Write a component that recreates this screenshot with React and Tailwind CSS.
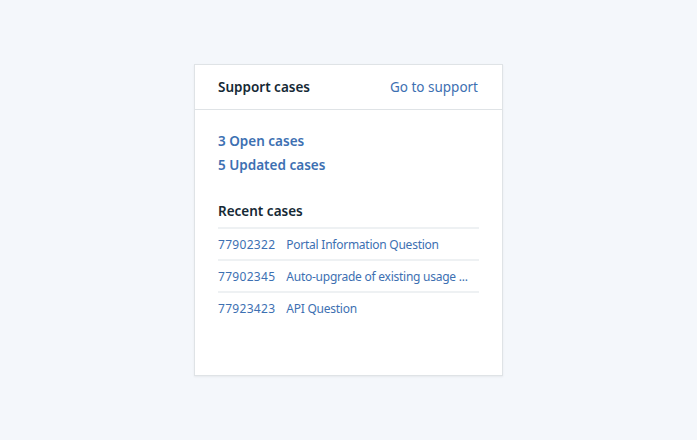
const cases = [
  { id: "77902322", title: "Portal Information Question" },
  { id: "77902345", title: "Auto-upgrade of existing usage ..." },
  { id: "77923423", title: "API Question" },
];

export default function App() {
  return (
    <div
      className="min-h-screen w-full flex items-center justify-center bg-[#f4f7fb]"
      style={{ fontFamily: '"Noto Sans", "Open Sans", sans-serif' }}
    >
      <div className="w-[309px] h-[312px] bg-white border border-[#dfe3e6] shadow-[0_1px_2px_rgba(0,0,0,0.06)] flex flex-col">
        <div className="h-[45px] px-[23px] flex items-center justify-between border-b border-[#dfe3e6]">
          <span className="text-[13.5px] font-semibold text-[#152935]">Support cases</span>
          <a className="text-[13.5px] mr-[1px] text-[#3d70b2]">Go to support</a>
        </div>
        <div className="px-[23px] pt-[19px]">
          <div className="flex flex-col">
            <a className="text-[13.5px] leading-6 font-semibold text-[#3d70b2]">3 Open cases</a>
            <a className="text-[13.5px] leading-6 font-semibold text-[#3d70b2]">5 Updated cases</a>
          </div>
          <h3 className="mt-[22px] text-[13.5px] leading-6 font-semibold text-[#152935]">Recent cases</h3>
          <ul className="mt-[4px]">
            {cases.map((c) => (
              <li
                key={c.id}
                className="h-8 pt-[2px] flex items-center gap-[11px] border-t-2 border-[#eef1f3] text-[12px] text-[#3d70b2]"
              >
                <span className="tracking-[0.3px]">{c.id}</span>
                <span className="truncate tracking-[-0.25px]">{c.title}</span>
              </li>
            ))}
          </ul>
        </div>
      </div>
    </div>
  );
}
